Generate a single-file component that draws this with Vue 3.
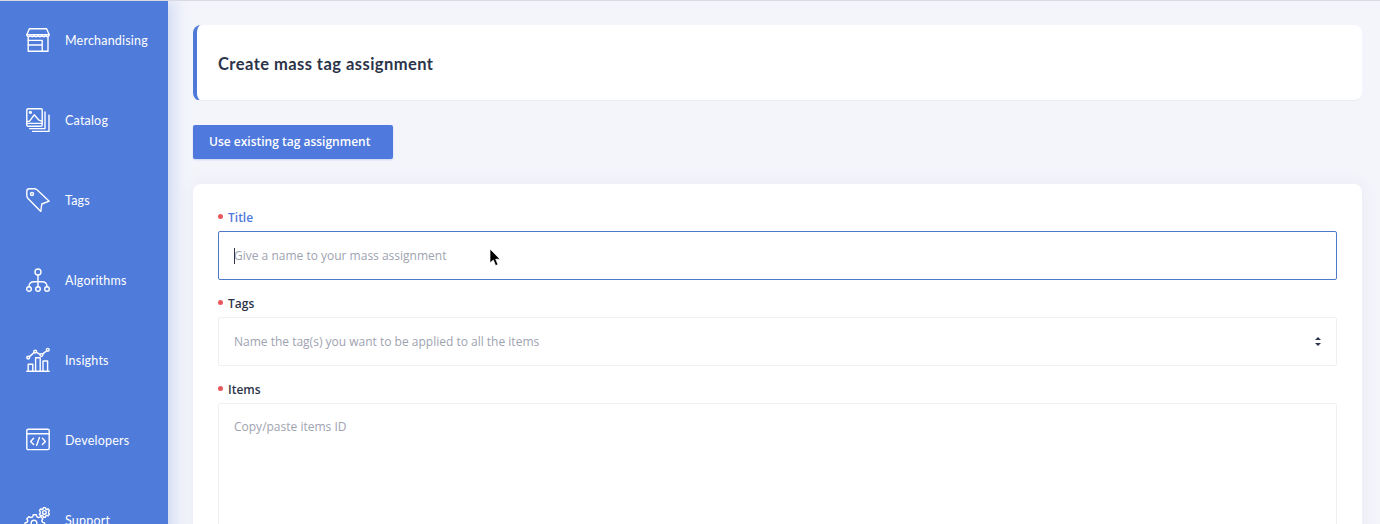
<script setup>
const nav = [
  { label: 'Merchandising', icon: 'store' },
  { label: 'Catalog', icon: 'catalog' },
  { label: 'Tags', icon: 'tag' },
  { label: 'Algorithms', icon: 'algo' },
  { label: 'Insights', icon: 'insights' },
  { label: 'Developers', icon: 'dev' },
  { label: 'Support', icon: 'support' },
]
</script>

<template>
  <div class="page">
    <aside class="sidebar">
      <div v-for="item in nav" :key="item.label" class="nav-item">
        <svg class="nav-icon" viewBox="0 0 24 24" fill="none" stroke="#fff" stroke-width="1.4" stroke-linecap="round" stroke-linejoin="round">
          <template v-if="item.icon === 'store'">
            <path d="M3.4 .8H20.6L23.2 6.8H.8Z" />
            <path d="M.8 6.8C1.4 9.2 3.4 9.2 4.4 7.4 5.2 9.2 7.2 9.2 8.2 7.4 9 9.2 11 9.2 12 7.4 13 9.2 15 9.2 15.8 7.4 16.8 9.2 18.8 9.2 19.6 7.4 20.6 9.2 22.6 9.2 23.2 6.8" />
            <path d="M2.2 9.4V23.2H22V9.4" />
            <path d="M2.2 17H16.2M16.2 12.4V23.2M2.2 12.4H16.2" />
          </template>
          <template v-else-if="item.icon === 'catalog'">
            <rect x=".8" y=".8" width="15.4" height="17.4" rx="1.2" />
            <path d="M19 4V20.6H3.6M23 7.2V23.4H6.6" />
            <path d="M.8 13.4H3.4L8.2 6.8 13 12.2 16.2 13.4M.8 15.4H16.2" />
            <circle cx="4.4" cy="4.4" r=".9" />
          </template>
          <template v-else-if="item.icon === 'tag'">
            <path d="M.8 3.4C.8 1.8 1.8.8 3.4.8H8.6C9.6.8 10.2 1.2 11 1.8L23.2 13.2 15.8 16 14.8 23.4 2 10.4C1.2 9.6.8 8.8.8 7.8Z" />
            <circle cx="6" cy="6" r="1.5" />
          </template>
          <template v-else-if="item.icon === 'algo'">
            <circle cx="12" cy="4" r="3" />
            <circle cx="3" cy="21" r="2.3" />
            <circle cx="12" cy="21" r="2.3" />
            <circle cx="21" cy="21" r="2.3" />
            <path d="M12 7V18.7M3 18.7C3 15 5 13.8 8 13.8H16C19 13.8 21 15 21 18.7" />
          </template>
          <template v-else-if="item.icon === 'insights'">
            <path d="M.8 23.2H23.2" />
            <path d="M2.2 23V16.2H6.8V23M9.6 23V9.8H14.2V23M17 23V13H21.6V23" />
            <circle cx="2.2" cy="9.6" r="1.4" />
            <circle cx="9.2" cy="3.6" r="1.4" />
            <circle cx="15.4" cy="7" r="1.4" />
            <circle cx="21.8" cy="1.8" r="1.4" />
            <path d="M3.4 8.6L8 4.6M10.5 4.3L14.1 6.3M16.5 6.1L20.7 2.7" />
          </template>
          <template v-else-if="item.icon === 'dev'">
            <rect x=".8" y="1.2" width="22.4" height="20.4" rx="1.4" />
            <path d="M.8 5.8H23.2M7.6 10.2L4.6 13.4 7.6 16.6M16.4 10.2L19.4 13.4 16.4 16.6M13.4 9.4L10.6 17.4" />
          </template>
          <template v-else>
            <circle cx="8" cy="15" r="2.8" />
            <path d="M6.4 6.8H9.6L10.1 8.8 12 9.6 13.8 8.6 16 10.8 15 12.6 15.8 14.4 17.8 15V18.2L15.8 18.8 15 20.6 16 22.4 13.8 24.6 12 23.6 10.1 24.4 9.6 26.4H6.4L5.9 24.4 4 23.6 2.2 24.6 0 22.4 1 20.6.2 18.8-1.8 18.2V15L.2 14.4 1 12.6 0 10.8 2.2 8.6 4 9.6 5.9 8.8Z" transform="translate(.8 0)" />
            <circle cx="18.4" cy="4.4" r="1.8" />
            <path d="M17.4 -.4H19.4L19.8 1 21 1.5 22.2 .9 23.4 2.6 22.6 3.6V5.2L23.4 6.2 22.2 7.9 21 7.3 19.8 7.8 19.4 9.2H17.4L17 7.8 15.8 7.3 14.6 7.9 13.4 6.2 14.2 5.2V3.6L13.4 2.6 14.6 .9 15.8 1.5 17 1Z" />
          </template>
        </svg>
        <span class="nav-label">{{ item.label }}</span>
      </div>
    </aside>

    <main class="main">
      <header class="title-card">
        <h1>Create mass tag assignment</h1>
      </header>

      <button class="primary-btn" type="button">Use existing tag assignment</button>

      <form class="form-card">
        <div class="field">
          <div class="label active">Title</div>
          <div class="control focused">
            <span class="caret"></span>
            <span class="placeholder">Give a name to your mass assignment</span>
          </div>
        </div>
        <div class="field">
          <div class="label">Tags</div>
          <div class="control select">
            <span class="placeholder">Name the tag(s) you want to be applied to all the items</span>
            <span class="sort"></span>
          </div>
        </div>
        <div class="field">
          <div class="label">Items</div>
          <div class="control area">
            <span class="placeholder">Copy/paste items ID</span>
          </div>
        </div>
      </form>
    </main>

    <svg class="pointer" width="12" height="19" viewBox="0 0 12 19">
      <path d="M1 1V15L4.3 12 6.6 17.6 9 16.6 6.7 11.2H11Z" fill="#000" stroke="#fff" stroke-width=".7" />
    </svg>
  </div>
</template>

<style>
html, body {
  margin: 0;
  height: 100%;
  overflow: hidden;
  background: #f4f5fb;
}
</style>

<style scoped>
.page {
  position: relative;
  display: flex;
  width: 1380px;
  height: 524px;
  overflow: hidden;
  background: #f4f5fb;
  border-top: 1px solid #d9dbe2;
  box-sizing: border-box;
  font-family: "Open Sans", "Noto Sans", sans-serif;
}
.sidebar {
  flex: 0 0 168px;
  height: 560px;
  margin-top: -1px;
  background: #4f7bdb;
  box-shadow: 6px 0 14px rgba(79, 123, 219, 0.22);
  z-index: 1;
}
.nav-item {
  display: flex;
  align-items: center;
  height: 80px;
  padding-left: 26px;
  box-sizing: border-box;
  color: #fff;
}
.nav-icon {
  flex: 0 0 24px;
  width: 24px;
  height: 24px;
  overflow: visible;
}
.nav-label {
  margin-left: 15px;
  font-family: "Lato", sans-serif;
  font-size: 12.5px;
  letter-spacing: 0.2px;
  font-weight: 400;
}
.main {
  flex: 1;
  min-width: 0;
  padding: 24px 18px 0 25px;
}
.title-card {
  display: flex;
  align-items: center;
  height: 76px;
  padding-left: 21px;
  box-sizing: border-box;
  background: #fff;
  border-left: 4px solid #4e79d9;
  border-bottom: 1px solid #e9ebf5;
  border-radius: 8px;
}
.title-card h1 {
  margin: 2px 0 0;
  font-family: "Lato", sans-serif;
  font-size: 16.5px;
  font-weight: 700;
  color: #2b3449;
  letter-spacing: 0.45px;
}
.primary-btn {
  display: block;
  width: 200px;
  height: 34px;
  margin-top: 24px;
  padding: 0 0 1px 16px;
  text-align: left;
  border: 0;
  border-radius: 2px;
  background: #4f79dc;
  color: #fff;
  font-family: inherit;
  font-size: 12px;
  font-weight: 600;
  box-shadow: 0 1px 2px rgba(79, 121, 220, 0.25);
}
.form-card {
  height: 400px;
  margin-top: 25px;
  padding: 24px 25px 0;
  background: #fff;
  border-radius: 8px;
  box-shadow: 0 0 16px rgba(80, 90, 140, 0.07);
}
.field {
  margin-bottom: 14px;
}
.label {
  display: flex;
  align-items: center;
  height: 18px;
  margin-bottom: 5px;
  padding-left: 10px;
  position: relative;
  font-size: 12px;
  font-weight: 600;
  color: #2b3449;
}
.label::before {
  content: "";
  position: absolute;
  left: 0;
  top: 6px;
  width: 5px;
  height: 5px;
  border-radius: 50%;
  background: #e9585c;
}
.label.active {
  color: #4f79dc;
}
.control {
  position: relative;
  display: flex;
  align-items: center;
  height: 49px;
  padding: 0 15px;
  box-sizing: border-box;
  border: 1px solid #eff0f4;
  border-radius: 2px;
  background: #fff;
}
.control.focused {
  border-color: #4f79c8;
}
.placeholder {
  font-size: 12px;
  color: #9ea3b0;
}
.caret {
  position: absolute;
  left: 15px;
  top: 16px;
  width: 1px;
  height: 16px;
  background: #2b3449;
}
.select {
  justify-content: space-between;
}
.sort {
  position: relative;
  width: 6px;
  height: 9px;
}
.sort::before,
.sort::after {
  content: "";
  position: absolute;
  left: 0;
  border-left: 3px solid transparent;
  border-right: 3px solid transparent;
}
.sort::before {
  top: 0;
  border-bottom: 3.5px solid #2b3449;
}
.sort::after {
  bottom: 0;
  border-top: 3.5px solid #2b3449;
}
.area {
  align-items: flex-start;
  height: 200px;
  padding-top: 14px;
}
.pointer {
  position: absolute;
  left: 489px;
  top: 247px;
  z-index: 2;
}
</style>
